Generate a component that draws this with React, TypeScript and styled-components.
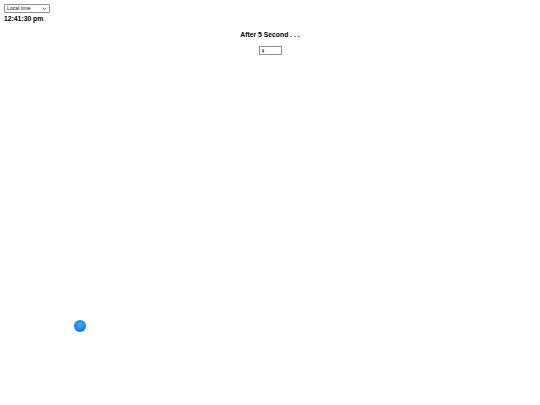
import React, { useState } from 'react';
import styled, { createGlobalStyle } from 'styled-components';

const GlobalStyle = createGlobalStyle`
	body {
		margin: 4px;
		font-family: 'Liberation Sans', Arial, sans-serif;
		background: #ffffff;
		color: #000000;
	}
`;

function App() {
	const [zone, setZone] = useState('local');
	const [count, setCount] = useState('4');

	return (
		<>
			<GlobalStyle />
			<Page>
				<SelectWrap>
					<ZoneSelect value={zone} onChange={(e) => setZone(e.target.value)}>
						<option value='local'>Local time</option>
						<option value='utc'>UTC</option>
					</ZoneSelect>
					<Chevron viewBox='0 0 6 4'>
						<path d='M0.8 0.8 L3 3 L5.2 0.8' fill='none' stroke='#333' strokeWidth='0.9' />
					</Chevron>
				</SelectWrap>
				<Clock>12:41:30 pm</Clock>
				<Countdown>
					<Heading>After 5 Second . . .</Heading>
					<CountInput
						type='text'
						value={count}
						onChange={(e) => setCount(e.target.value)}
					/>
				</Countdown>
				<Ball />
			</Page>
		</>
	);
}

const Page = styled.div`
	display: flex;
	flex-direction: column;
	align-items: flex-start;
	min-height: 395px;
`;

const SelectWrap = styled.div`
	position: relative;
	display: flex;
`;

const ZoneSelect = styled.select`
	appearance: none;
	width: 46px;
	height: 9px;
	font-size: 5.2px;
	line-height: 7px;
	font-family: 'Liberation Sans', Arial, sans-serif;
	padding: 0 0 0 2px;
	border: 1px solid #8f8f8f;
	border-radius: 1px;
	background: #fff;
	color: #222;
	box-sizing: border-box;
	outline: none;
`;

const Chevron = styled.svg`
	position: absolute;
	right: 3px;
	top: 3px;
	width: 5px;
	height: 3.5px;
	pointer-events: none;
`;

const Clock = styled.div`
	margin-top: 2px;
	font-size: 6.8px;
	font-weight: bold;
	line-height: 8px;
`;

const Countdown = styled.section`
	align-self: stretch;
	display: flex;
	flex-direction: column;
	align-items: center;
	margin-top: 8px;
`;

const Heading = styled.h3`
	margin: 0;
	font-size: 6.8px;
	font-weight: bold;
	line-height: 8px;
`;

const CountInput = styled.input`
	margin-top: 7px;
	width: 23px;
	height: 9px;
	padding: 0 2px;
	font-size: 5px;
	font-family: 'Liberation Sans', Arial, sans-serif;
	border: 1px solid #8f8f8f;
	box-sizing: border-box;
	outline: none;
`;

const Ball = styled.div`
	position: absolute;
	left: 74px;
	top: 320px;
	width: 12px;
	height: 12px;
	border-radius: 50%;
	background: radial-gradient(circle at 50% 40%, #3fb0ff 0%, #1a8cf5 45%, #0a62d8 100%);
`;

export default App;
